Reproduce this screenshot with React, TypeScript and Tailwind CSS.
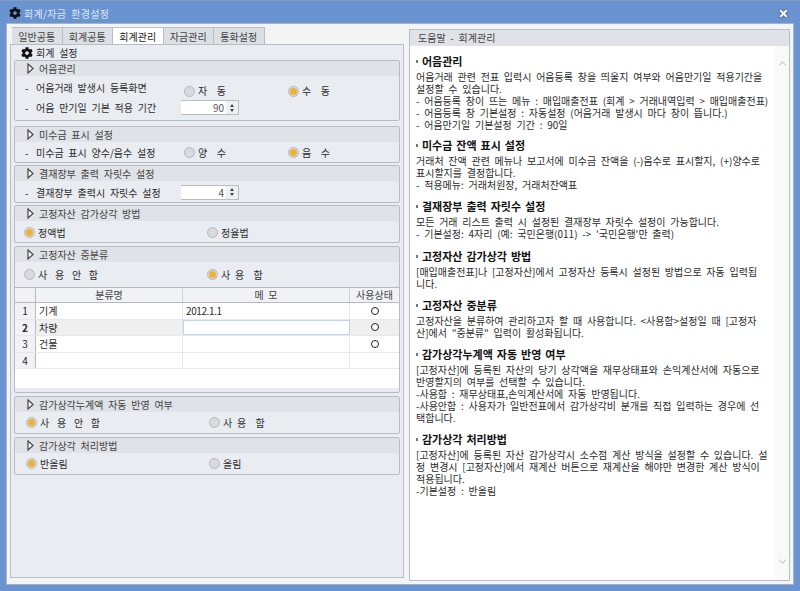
import type { ReactNode } from "react";
import { FaCog, FaTimes } from "react-icons/fa";
import { FiChevronDown, FiChevronUp } from "react-icons/fi";

const tabs = ["일반공통", "회계공통", "회계관리", "자금관리", "통화설정"];

const help = [
  {
    title: "어음관리",
    mt: "mt-[7px]",
    lines: [
      "어음거래 관련 전표 입력시 어음등록 창을 띄울지 여부와 어음만기일 적용기간을",
      "설정할 수 있습니다.",
      "- 어음등록 창이 뜨는 메뉴 : 매입매출전표 (회계 > 거래내역입력 > 매입매출전표)",
      "- 어음등록 창 기본설정 : 자동설정 (어음거래 발생시 마다 창이 뜹니다.)",
      "- 어음만기일 기본설정 기간 : 90일",
    ],
  },
  {
    title: "미수금 잔액 표시 설정",
    mt: "mt-[6px]",
    lines: [
      "거래처 잔액 관련 메뉴나 보고서에 미수금 잔액을 (-)음수로 표시할지, (+)양수로",
      "표시할지를 결정합니다.",
      "- 적용메뉴: 거래처원장, 거래처잔액표",
    ],
  },
  {
    title: "결재장부 출력 자릿수 설정",
    mt: "mt-[7px]",
    lines: [
      "모든 거래 리스트 출력 시 설정된 결재장부 자릿수 설정이 가능합니다.",
      "- 기본설정: 4자리 (예: 국민은행(011) -> '국민은행'만 출력)",
    ],
  },
  {
    title: "고정자산 감가상각 방법",
    mt: "mt-[8px]",
    lines: [
      "[매입매출전표]나 [고정자산]에서 고정자산 등록시 설정된 방법으로 자동 입력됩",
      "니다.",
    ],
  },
  {
    title: "고정자산 중분류",
    mt: "mt-[7px]",
    lines: [
      "고정자산을 분류하여 관리하고자 할 때 사용합니다. <사용함>설정일 때 [고정자",
      '산]에서 "중분류" 입력이 활성화됩니다.',
    ],
  },
  {
    title: "감가상각누계액 자동 반영 여부",
    mt: "mt-[7px]",
    lines: [
      "[고정자산]에 등록된 자산의 당기 상각액을 재무상태표와 손익계산서에 자동으로",
      "반영할지의 여부를 선택할 수 있습니다.",
      "-사용함 : 재무상태표,손익계산서에 자동 반영됩니다.",
      "-사용안함 : 사용자가 일반전표에서 감가상각비 분개를 직접 입력하는 경우에 선",
      "택합니다.",
    ],
  },
  {
    title: "감가상각 처리방법",
    mt: "mt-[7px]",
    lines: [
      "[고정자산]에 등록된 자산 감가상각시 소수점 계산 방식을 설정할 수 있습니다. 설",
      "정 변경시 [고정자산]에서 재계산 버튼으로 재계산을 해야만 변경한 계산 방식이",
      "적용됩니다.",
      "-기본설정 : 반올림",
    ],
  },
];

const rows = [
  { no: "1", name: "기계", memo: "2012.1.1", used: true },
  { no: "2", name: "차량", memo: "", used: true, active: true },
  { no: "3", name: "건물", memo: "", used: true },
  { no: "4", name: "", memo: "", used: false },
];

function Radio({ label, checked, wide }: { label: string; checked?: boolean; wide?: boolean }) {
  return (
    <div className={`flex items-center gap-[3px] whitespace-pre ${wide ? "tracking-[1px] [word-spacing:3.5px]" : ""}`}>
      <span className="flex h-[11px] w-[11px] items-center justify-center rounded-full border border-[#b4b8bc] bg-[#d8dadd]">
        {checked && <span className="h-[7px] w-[7px] rounded-full bg-[#f0b030]" />}
      </span>
      {label}
    </div>
  );
}

function Spinner({ value }: { value: string }) {
  return (
    <div className="flex h-[15px] w-[58px] border-t border-r border-b border-[#b8bdc4] bg-white">
      <div className="flex-1 pr-[2px] text-right leading-[14px] text-[#555]">{value}</div>
      <div className="flex w-[12px] flex-col items-center justify-center gap-[2px] bg-[#eef0f3]">
        <span className="border-x-[2px] border-b-[3px] border-x-transparent border-b-[#444]" />
        <span className="border-x-[2px] border-t-[3px] border-x-transparent border-t-[#444]" />
      </div>
    </div>
  );
}

function Dashed({ text }: { text: string }) {
  return (
    <>
      <span className="inline-block w-[11px]">-</span>
      {text}
    </>
  );
}

function Section({ title, className, children }: { title: string; className: string; children: ReactNode }) {
  return (
    <section className={`shrink-0 rounded-[2px] border border-[#b7bdc5] ${className}`}>
      <div className="flex h-[15px] items-center gap-[5px] bg-[#dfe2e6] pl-[12px] leading-[15px] text-[#444]">
        <svg width="7" height="11" viewBox="0 0 7 11" className="shrink-0">
          <path d="M1 1 L6 5.5 L1 10 Z" fill="#fff" stroke="#444" strokeWidth="1.2" />
        </svg>
        {title}
      </div>
      {children}
    </section>
  );
}

function RadioRow({ left, right, className }: { left: ReactNode; right: ReactNode; className: string }) {
  return (
    <div className={`flex items-center ${className}`}>
      <div className="w-[183px]">{left}</div>
      {right}
    </div>
  );
}

export default function App() {
  return (
    <div className="flex h-[591px] w-[800px] flex-col overflow-hidden border-t border-[#8a9bb5] bg-[#6a93d1] font-['Noto_Sans_CJK_KR','Noto_Sans',sans-serif] text-[10px] text-[#2b2b2b] [word-spacing:2.5px]">
      <header className="flex h-[22px] items-center pl-[9px] pr-[11px] pt-[2px] text-[#dde7f4]">
        <FaCog className="text-[12px] text-[#111]" />
        <span className="ml-[3px] flex-1 tracking-[0.3px]">회계/자금 환경설정</span>
        <FaTimes className="text-[11px] text-white drop-shadow-[0_0_1px_#445]" />
      </header>

      <main className="mx-[6px] flex h-[562px] gap-[5px] border border-[#aab2bd] bg-[#f3f4f6] px-[3px] pb-[3px] pt-[3px]">
        <div className="flex w-[394px] flex-col">
          <nav className="flex h-[17px] pl-[2px]">
            {tabs.map((tab, i) => (
              <div
                key={tab}
                className={`flex w-[50.5px] items-center justify-center border-t border-r border-[#b9bec5] leading-[15px] ${
                  i === 2 ? "bg-white text-[#222]" : "bg-[#dcdfe3] text-[#444]"
                }`}
              >
                {tab}
              </div>
            ))}
          </nav>

          <div className="flex h-[534px] flex-col border border-[#b9bec5] bg-[#e9ecf1] px-[3px]">
            <div className="flex h-[15px] shrink-0 items-center gap-[3px] pl-[7px] leading-[15px]">
              <FaCog className="text-[12px] text-[#111]" />
              회계 설정
            </div>

            <Section title="어음관리" className="h-[61px]">
              <div className="flex h-[24px] items-start pl-[10px] pt-[6px] leading-[12px]">
                <div className="w-[159px]"><Dashed text="어음거래 발생시 등록화면" /></div>
                <div className="mt-[3px] w-[104px]"><Radio label="자  동" /></div>
                <div className="mt-[3px]"><Radio label="수  동" checked /></div>
              </div>
              <div className="flex items-center pl-[10px]">
                <div className="w-[156px]"><Dashed text="어음 만기일 기본 적용 기간" /></div>
                <Spinner value="90" />
              </div>
            </Section>

            <Section title="미수금 표시 설정" className="mt-[5px] h-[37px]">
              <div className="flex h-[21px] items-center pl-[10px]">
                <div className="w-[159px]"><Dashed text="미수금 표시 양수/음수 설정" /></div>
                <div className="w-[104px]"><Radio label="양  수" /></div>
                <Radio label="음  수" checked />
              </div>
            </Section>

            <Section title="결재장부 출력 자릿수 설정" className="mt-[2px] h-[38px]">
              <div className="flex h-[21px] items-center pl-[10px] pt-[1px]">
                <div className="w-[156px]"><Dashed text="결재장부 출력시 자릿수 설정" /></div>
                <Spinner value="4" />
              </div>
            </Section>

            <Section title="고정자산 감가상각 방법" className="mt-[2px] h-[38px]">
              <RadioRow left={<Radio label="정액법" checked />} right={<Radio label="정율법" />} className="h-[22px] pl-[9px]" />
            </Section>

            <Section title="고정자산 중분류" className="mt-[3px] h-[147px]">
              <RadioRow left={<Radio label="사 용 안 함" wide />} right={<Radio label="사 용  함" checked />} className="h-[25px] pl-[9px]" />
              <div className="h-[101px] bg-white">
                <div className="grid h-[16px] grid-cols-[21px_147px_167px_1fr] border-y border-[#b5bac1] bg-[#f0f2f5] text-center leading-[14px] text-[#444]">
                  <div className="border-r border-[#b5bac1]" />
                  <div className="border-r border-[#cfd3d8]">분류명</div>
                  <div className="border-r border-[#cfd3d8]">메  모</div>
                  <div>사용상태</div>
                </div>
                {rows.map((r) => (
                  <div
                    key={r.no}
                    className={`grid h-[16.5px] grid-cols-[21px_147px_167px_1fr] border-b border-[#e6e8eb] leading-[15px] ${
                      r.active ? "bg-[#efefef]" : "bg-white"
                    }`}
                  >
                    <div className={`border-r border-[#b5bac1] bg-[#f0f2f5] text-center ${r.active ? "font-bold" : ""}`}>{r.no}</div>
                    <div className="border-r border-[#e6e8eb] pl-[3px]">{r.name}</div>
                    <div className={`border-r pl-[3px] tracking-[-0.4px] ${r.active ? "border border-[#bcd4ee] bg-white" : "border-[#e6e8eb]"}`}>{r.memo}</div>
                    <div className="flex items-center justify-center">
                      {r.used && <span className="h-[8px] w-[8px] rounded-full border border-[#222] bg-white" />}
                    </div>
                  </div>
                ))}
              </div>
            </Section>

            <Section title="감가상각누계액 자동 반영 여부" className="mt-[3px] h-[38px]">
              <RadioRow left={<Radio label="사 용 안 함" wide checked />} right={<Radio label="사 용  함" />} className="h-[21px] pl-[11px]" />
            </Section>

            <Section title="감가상각 처리방법" className="mt-[3px] h-[38px]">
              <RadioRow left={<Radio label="반올림" checked />} right={<Radio label="올림" />} className="h-[21px] pl-[11px]" />
            </Section>
          </div>
        </div>

        <aside className="mt-[2px] flex h-[552px] w-[381px] flex-col border border-[#b9bec5] bg-white">
          <div className="flex h-[16px] shrink-0 items-center bg-[#dfe2e6] pl-[8px] leading-[16px] text-[#444]">
            도움말 - 회계관리
          </div>
          <div className="flex min-h-0 flex-1">
            <div className="flex-1 pl-[6px]">
              {help.map((h) => (
                <div key={h.title} className={h.mt}>
                  <div className="flex h-[16px] items-center text-[11px] font-bold leading-[16px] text-[#111] [word-spacing:1.5px]">
                    <span className="mr-[4px] h-[3px] w-[2px] bg-[#777]" />
                    {h.title}
                  </div>
                  <div className="mt-[2px]">
                    {h.lines.map((line) => (
                      <p key={line} className="whitespace-pre leading-[12px]">{line}</p>
                    ))}
                  </div>
                </div>
              ))}
            </div>
            <div className="flex w-[14px] flex-col items-center justify-between bg-[#f9f9f9] pb-[12px] pt-[11px] text-[13px] text-[#c8ccd0]">
              <FiChevronUp />
              <FiChevronDown />
            </div>
          </div>
        </aside>
      </main>
    </div>
  );
}
